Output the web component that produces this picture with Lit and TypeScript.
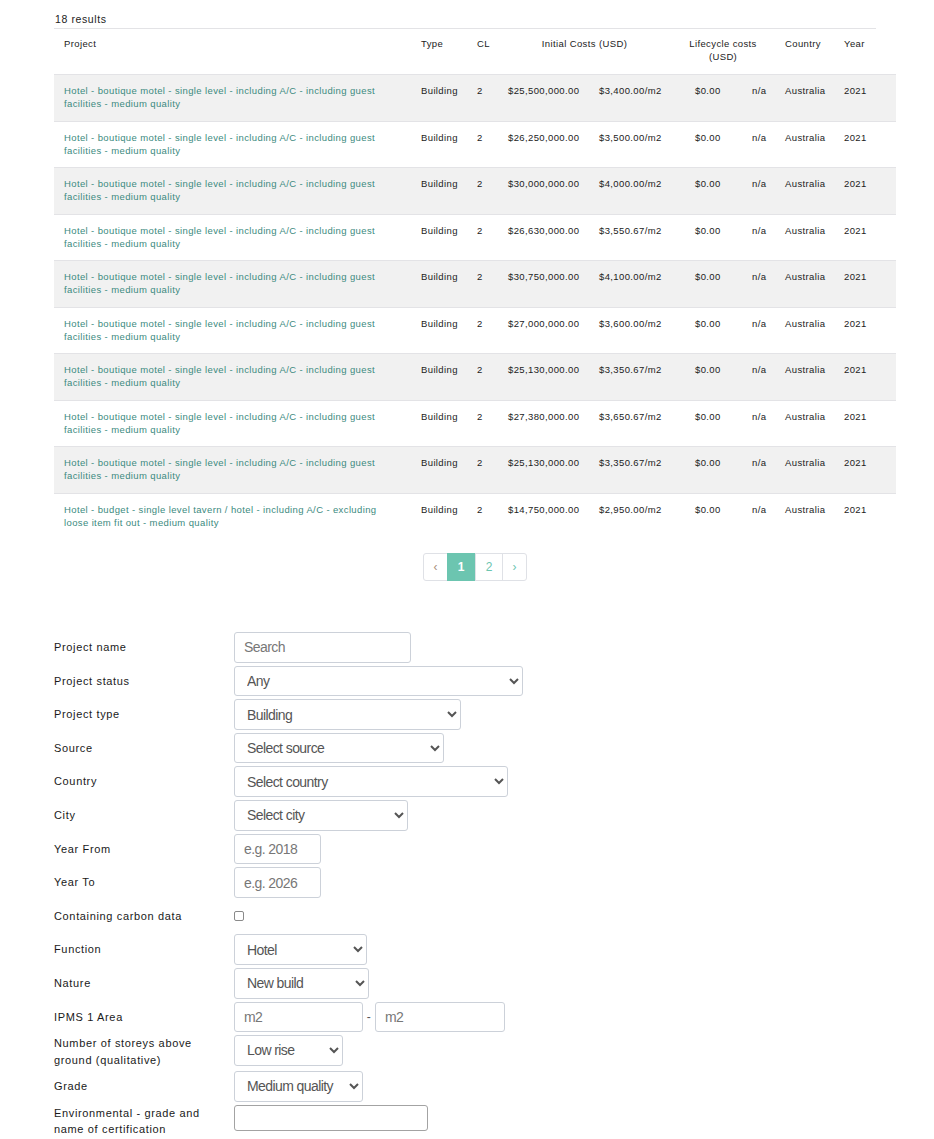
import {LitElement, html, css} from "lit";
import {customElement} from "lit/decorators.js";

const BOUTIQUE = "Hotel - boutique motel - single level - including A/C - including guest facilities - medium quality";
const BUDGET = "Hotel - budget - single level tavern / hotel - including A/C - excluding loose item fit out - medium quality";

const ROWS = [
  [BOUTIQUE, "$25,500,000.00", "$3,400.00/m2"],
  [BOUTIQUE, "$26,250,000.00", "$3,500.00/m2"],
  [BOUTIQUE, "$30,000,000.00", "$4,000.00/m2"],
  [BOUTIQUE, "$26,630,000.00", "$3,550.67/m2"],
  [BOUTIQUE, "$30,750,000.00", "$4,100.00/m2"],
  [BOUTIQUE, "$27,000,000.00", "$3,600.00/m2"],
  [BOUTIQUE, "$25,130,000.00", "$3,350.67/m2"],
  [BOUTIQUE, "$27,380,000.00", "$3,650.67/m2"],
  [BOUTIQUE, "$25,130,000.00", "$3,350.67/m2"],
  [BUDGET, "$14,750,000.00", "$2,950.00/m2"],
];

@customElement("app-root")
export class AppRoot extends LitElement {
  static styles = css`
    :host {
      display: block;
      font-family: "Liberation Sans", Arial, sans-serif;
      color: #222;
      height: 1139px;
      overflow: hidden;
    }
    .page {
      width: 822px;
      padding: 13px 0 0 54px;
    }
    .count {
      font-size: 10.5px;
      line-height: 12px;
      letter-spacing: 0.6px;
      padding: 0 0 3px 1px;
      border-bottom: 1px solid #e3e3e6;
    }
    table {
      table-layout: fixed;
      width: 842px;
      border-collapse: collapse;
      font-size: 9.5px;
      line-height: 13px;
      letter-spacing: 0.38px;
    }
    th, td {
      padding: 9px 0 0 10px;
      vertical-align: top;
      text-align: left;
      font-weight: normal;
    }
    th {
      height: 37px;
      padding-top: 8px;
      border-bottom: 1px solid #e3e3e6;
    }
    th.center {
      text-align: center;
      padding-left: 0;
    }
    td {
      height: 36.55px;
      border-bottom: 1px solid #e3e3e6;
    }
    tbody tr:last-child td {
      border-bottom: none;
    }
    tbody tr:nth-child(odd) td {
      background: #f1f1f1;
    }
    td.name {
      padding-right: 16px;
    }
    td.zero {
      padding-left: 24px;
    }
    a {
      color: #3c8a80;
      text-decoration: none;
    }
    .pager {
      display: flex;
      justify-content: center;
      width: 842px;
      margin-top: 14px;
    }
    .pages {
      display: flex;
      border: 1px solid #dfe1e6;
      border-radius: 3px;
      height: 26px;
      font-size: 12px;
      line-height: 26px;
      color: #6cc5b0;
      text-align: center;
    }
    .pages span {
      border-left: 1px solid #dfe1e6;
    }
    .pages span:first-child {
      border-left: none;
    }
    .pages .prev { width: 23px; color: #a98f7c; }
    .pages .on {
      width: 28px;
      margin: -1px 0;
      padding: 1px 0;
      border-left: none;
      background: #6cc5b0;
      color: #fff;
      font-weight: bold;
    }
    .pages .two { width: 26px; }
    .pages .next { width: 23px; }
    form {
      display: grid;
      grid-template-columns: 180px 1fr;
      align-items: center;
      row-gap: 3px;
      margin-top: 50.6px;
      font-size: 11px;
      letter-spacing: 0.65px;
      line-height: 16.5px;
    }
    label {
      color: #1a1a1a;
    }
    .field {
      display: flex;
      align-items: center;
      align-self: start;
      min-height: 30.6px;
    }
    input[type="text"], select {
      box-sizing: border-box;
      height: 30.6px;
      margin: 0;
      border: 1px solid #ccd1d9;
      border-radius: 3px;
      background: #fff;
      color: #555;
      font: 14px "Liberation Sans", Arial, sans-serif;
      letter-spacing: -0.58px;
    }
    input[type="text"] {
      padding: 0 9px;
    }
    input::placeholder {
      color: #777;
    }
    select {
      padding: 0 8px;
    }
    input[type="checkbox"] {
      appearance: none;
      box-sizing: border-box;
      width: 10px;
      height: 10px;
      margin: 0;
      border: 1px solid #8a8a8a;
      border-radius: 2px;
      background: #fff;
    }
    .w87 { width: 87px; }
    .w109 { width: 109px; }
    .w129 { width: 129px; }
    .w130 { width: 130px; }
    .w133 { width: 133px; }
    .w135 { width: 135px; }
    .w174 { width: 174px; }
    .w177 { width: 177px; }
    .w210 { width: 210px; }
    .w227 { width: 227px; }
    .w274 { width: 274px; }
    .w289 { width: 289px; }
    .dash {
      width: 12px;
      text-align: center;
      color: #555;
      font-size: 12px;
    }
    input.cert {
      width: 194px;
      height: 26px;
      align-self: flex-start;
      border-color: #a3a3a3;
    }
  `;

  pick(cls: string, text: string) {
    return html`<select class=${cls}><option>${text}</option></select>`;
  }

  render() {
    return html`
      <div class="page">
        <div class="count">18 results</div>
        <table>
          <colgroup>
            <col style="width:357px" /><col style="width:56px" /><col style="width:31px" />
            <col style="width:91px" /><col style="width:82px" /><col style="width:71px" />
            <col style="width:33px" /><col style="width:59px" /><col style="width:62px" />
          </colgroup>
          <thead>
            <tr>
              <th>Project</th>
              <th>Type</th>
              <th>CL</th>
              <th class="center" colspan="2">Initial Costs (USD)</th>
              <th class="center" colspan="2">Lifecycle costs<br />(USD)</th>
              <th>Country</th>
              <th>Year</th>
            </tr>
          </thead>
          <tbody>
            ${ROWS.map(
              ([name, cost, rate]) => html`
                <tr>
                  <td class="name"><a href="#">${name}</a></td>
                  <td>Building</td>
                  <td>2</td>
                  <td>${cost}</td>
                  <td>${rate}</td>
                  <td class="zero">$0.00</td>
                  <td>n/a</td>
                  <td>Australia</td>
                  <td>2021</td>
                </tr>
              `
            )}
          </tbody>
        </table>
        <div class="pager">
          <div class="pages">
            <span class="prev">‹</span><span class="on">1</span><span class="two">2</span><span class="next">›</span>
          </div>
        </div>
        <form>
          <label>Project name</label>
          <div class="field"><input type="text" class="w177" placeholder="Search" /></div>
          <label>Project status</label>
          <div class="field">${this.pick("w289", "Any")}</div>
          <label>Project type</label>
          <div class="field">${this.pick("w227", "Building")}</div>
          <label>Source</label>
          <div class="field">${this.pick("w210", "Select source")}</div>
          <label>Country</label>
          <div class="field">${this.pick("w274", "Select country")}</div>
          <label>City</label>
          <div class="field">${this.pick("w174", "Select city")}</div>
          <label>Year From</label>
          <div class="field"><input type="text" class="w87" placeholder="e.g. 2018" /></div>
          <label>Year To</label>
          <div class="field"><input type="text" class="w87" placeholder="e.g. 2026" /></div>
          <label>Containing carbon data</label>
          <div class="field"><input type="checkbox" /></div>
          <label>Function</label>
          <div class="field">${this.pick("w133", "Hotel")}</div>
          <label>Nature</label>
          <div class="field">${this.pick("w135", "New build")}</div>
          <label>IPMS 1 Area</label>
          <div class="field">
            <input type="text" class="w129" placeholder="m2" />
            <span class="dash">-</span>
            <input type="text" class="w130" placeholder="m2" />
          </div>
          <label>Number of storeys above<br />ground (qualitative)</label>
          <div class="field">${this.pick("w109", "Low rise")}</div>
          <label>Grade</label>
          <div class="field">${this.pick("w129", "Medium quality")}</div>
          <label>Environmental - grade and<br />name of certification</label>
          <div class="field"><input type="text" class="cert" /></div>
        </form>
      </div>
    `;
  }
}
